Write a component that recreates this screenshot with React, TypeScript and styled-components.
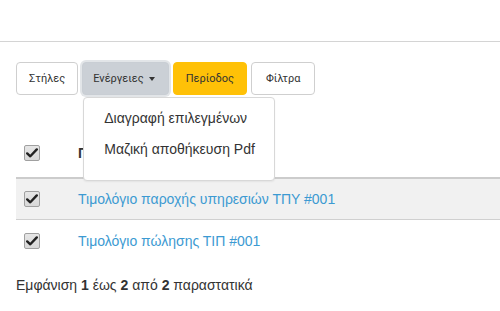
import React from "react";
import styled, { createGlobalStyle } from "styled-components";

const GlobalStyle = createGlobalStyle`
  body {
    margin: 0;
    background: #ffffff;
    font-family: "Liberation Sans", Arial, sans-serif;
    color: #333333;
  }
`;

const TopBar = styled.div`
  height: 41px;
  border-bottom: 1px solid #d4d4d4;
`;

const Content = styled.div`
  padding: 20px 0 0 16px;
`;

const Toolbar = styled.div`
  display: flex;
  align-items: center;
  gap: 4px;
`;

const Button = styled.button<{ $variant?: "light" | "gray" | "warning"; $pad?: number }>`
  box-sizing: border-box;
  display: inline-flex;
  align-items: center;
  height: 33px;
  padding: 0 ${(p) => p.$pad ?? 12}px;
  border-radius: 4px;
  font-family: Roboto, "Liberation Sans", sans-serif;
  font-size: 11px;
  color: #333333;
  cursor: pointer;
  border: 1px solid
    ${(p) => (p.$variant === "warning" ? "#ffc107" : p.$variant === "gray" ? "#c9ced4" : "#cfcfcf")};
  background: ${(p) => (p.$variant === "warning" ? "#ffc107" : p.$variant === "gray" ? "#cbd0d6" : "#ffffff")};
  box-shadow: ${(p) => (p.$variant === "gray" ? "0 0 0 2px #e2e5e8" : "none")};
  ${(p) => (p.$variant === "gray" ? "padding-left: 10px; padding-right: 13px;" : "")}
`;

const Caret = styled.span`
  display: inline-block;
  margin-left: 5px;
  width: 0;
  height: 0;
  border-left: 3.5px solid transparent;
  border-right: 3.5px solid transparent;
  border-top: 4px solid #333333;
`;

const DropdownWrap = styled.div`
  position: relative;
  display: inline-flex;
`;

const Menu = styled.div`
  position: absolute;
  top: 35px;
  left: 1px;
  z-index: 10;
  box-sizing: border-box;
  width: 192px;
  padding: 5px 0 15px;
  background: #ffffff;
  border: 1px solid #d8d8d8;
  border-radius: 4px;
  box-shadow: 0 1px 2px rgba(0, 0, 0, 0.06);
`;

const MenuItem = styled.div`
  height: 31px;
  line-height: 31px;
  padding-left: 20px;
  font-size: 14px;
  color: #333333;
  white-space: nowrap;
`;

const Table = styled.div`
  margin-top: 40px;
`;

const Row = styled.div<{ $header?: boolean; $striped?: boolean }>`
  box-sizing: border-box;
  display: grid;
  grid-template-columns: 62px 1fr;
  align-items: center;
  height: ${(p) => (p.$header ? "44px" : "41px")};
  padding-bottom: ${(p) => (p.$header ? "6px" : "0")};
  background: ${(p) => (p.$striped ? "#f1f1f1" : "#ffffff")};
  border-bottom: ${(p) => (p.$header ? "2px solid #cccccc" : p.$striped ? "1px solid #d0d0d0" : "none")};
  font-size: 14px;
  font-weight: ${(p) => (p.$header ? "bold" : "normal")};
`;

const CheckCell = styled.div`
  padding-left: 8px;
  display: flex;
  align-items: center;
`;

const Check = styled.span`
  box-sizing: border-box;
  width: 16px;
  height: 16px;
  border: 1px solid #a0a0a0;
  border-radius: 2px;
  background: linear-gradient(#e6e6e6, #d8d8d8);
  display: flex;
  align-items: center;
  justify-content: center;
`;

const Link = styled.a`
  color: #3c9ad2;
  text-decoration: none;
  white-space: nowrap;
`;

const Footer = styled.div`
  margin-top: 16px;
  font-size: 14px;
  color: #333333;
`;

const Checkbox: React.FC = () => (
  <Check>
    <svg width="12" height="10" viewBox="0 0 12 10">
      <path d="M1.2 5.4 L4.3 8.3 L10.8 1.4" fill="none" stroke="#222" strokeWidth="2.4" strokeLinecap="round" strokeLinejoin="round" />
    </svg>
  </Check>
);

const rows = ["Τιμολόγιο παροχής υπηρεσιών ΤΠΥ #001", "Τιμολόγιο πώλησης ΤΙΠ #001"];

export default function App() {
  return (
    <>
      <GlobalStyle />
      <TopBar />
      <Content>
        <Toolbar>
          <Button $variant="light">Στήλες</Button>
          <DropdownWrap>
            <Button $variant="gray">
              Ενέργειες
              <Caret />
            </Button>
            <Menu>
              <MenuItem>Διαγραφή επιλεγμένων</MenuItem>
              <MenuItem>Μαζική αποθήκευση Pdf</MenuItem>
            </Menu>
          </DropdownWrap>
          <Button $variant="warning">Περίοδος</Button>
          <Button $variant="light" $pad={14}>
            Φίλτρα
          </Button>
        </Toolbar>
        <Table>
          <Row $header>
            <CheckCell>
              <Checkbox />
            </CheckCell>
            <div>Παραστατικό</div>
          </Row>
          {rows.map((r, i) => (
            <Row key={r} $striped={i === 0}>
              <CheckCell>
                <Checkbox />
              </CheckCell>
              <Link href="#">{r}</Link>
            </Row>
          ))}
        </Table>
        <Footer>
          Εμφάνιση <b>1</b> έως <b>2</b> από <b>2</b> παραστατικά
        </Footer>
      </Content>
    </>
  );
}
